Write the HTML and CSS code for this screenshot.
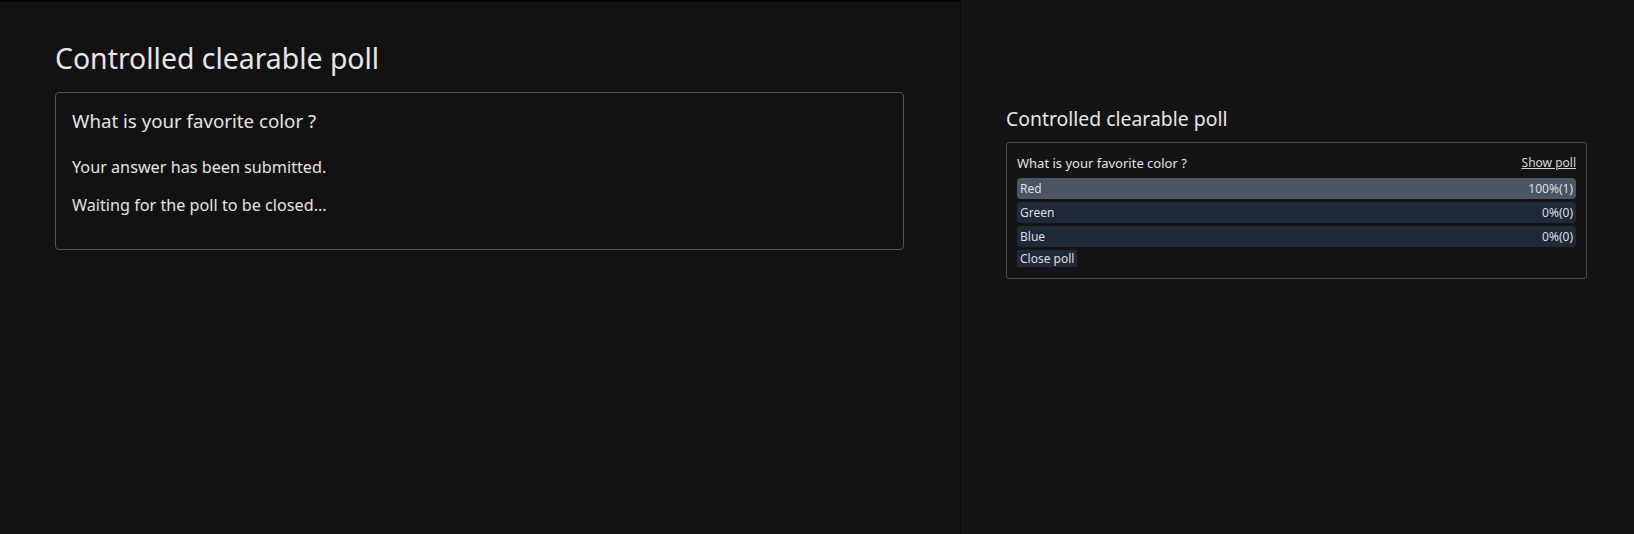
FILE: index.html
```html
<!DOCTYPE html>
<html lang="en">
<head>
<meta charset="utf-8">
<title>Controlled clearable poll</title>
<link rel="stylesheet" href="styles.css">
</head>
<body>
<div class="app">
  <main class="main">
    <h1 class="title">Controlled clearable poll</h1>
    <section class="poll-card">
      <h2 class="poll-question">What is your favorite color ?</h2>
      <p class="poll-msg poll-msg-first">Your answer has been submitted.</p>
      <p class="poll-msg">Waiting for the poll to be closed...</p>
    </section>
  </main>
  <aside class="side">
    <h2 class="side-title">Controlled clearable poll</h2>
    <section class="admin-card">
      <div class="admin-head">
        <span class="admin-question">What is your favorite color ?</span>
        <a class="show-link" href="#">Show poll</a>
      </div>
      <div class="bars">
        <div class="bar bar-lead"><span>Red</span><span>100%(1)</span></div>
        <div class="bar"><span>Green</span><span>0%(0)</span></div>
        <div class="bar"><span>Blue</span><span>0%(0)</span></div>
      </div>
      <button class="close-btn" type="button">Close poll</button>
    </section>
  </aside>
</div>
</body>
</html>
```

FILE: styles.css
```css
html, body {
  margin: 0;
  padding: 0;
  height: 100%;
}
body {
  background: #121212;
  color: #e3e3e3;
  font-family: "Noto Sans", "Open Sans", sans-serif;
}
.app {
  display: flex;
  height: 100%;
}
.main {
  width: 960px;
  box-sizing: border-box;
  padding: 0 56px 0 55px;
  border-top: 2px solid #060606;
  background: #121212;
}
.title {
  margin: 36px 0 0;
  font-weight: 400;
  font-size: 28.4px;
  line-height: 40px;
  color: #e6e6e6;
}
.poll-card {
  margin-top: 14px;
  border: 1px solid #4b5260;
  border-radius: 4px;
  padding: 10px 16px 18px;
  height: 158px;
  box-sizing: border-box;
}
.poll-question {
  margin: 5px 0 0;
  font-size: 18.7px;
  font-weight: 400;
  line-height: 26px;
}
.poll-msg {
  margin: 12px 0 0;
  font-size: 16.2px;
  line-height: 26px;
}
.poll-msg-first {
  margin-top: 20px;
}
.side {
  flex: 1;
  background: #141414;
  border-left: 1px solid #0e0e0e;
  padding: 0 47px 0 45px;
}
.side-title {
  margin: 105px 0 0;
  font-size: 19.4px;
  font-weight: 400;
  line-height: 28px;
  color: #e6e6e6;
}
.admin-card {
  margin-top: 9px;
  border: 1px solid #45474b;
  border-radius: 3px;
  padding: 10px 10px 11px;
}
.admin-head {
  display: flex;
  justify-content: space-between;
  align-items: center;
  font-size: 13px;
  line-height: 20px;
  margin-bottom: 5px;
}
.show-link {
  color: #d8d8d8;
  font-size: 12px;
  text-decoration: underline;
}
.bars {
  display: flex;
  flex-direction: column;
  gap: 3px;
}
.bar {
  display: flex;
  justify-content: space-between;
  align-items: center;
  height: 21px;
  padding: 0 3px;
  border-radius: 4px;
  background: #1f2937;
  font-size: 12px;
  color: #dedfe2;
}
.bar-lead {
  background: #4b5563;
}
.close-btn {
  display: block;
  margin-top: 3px;
  border: 0;
  padding: 0 3px;
  height: 17px;
  background: #1f2937;
  color: #dedfe2;
  font-family: inherit;
  font-size: 12px;
  line-height: 17px;
}
```
